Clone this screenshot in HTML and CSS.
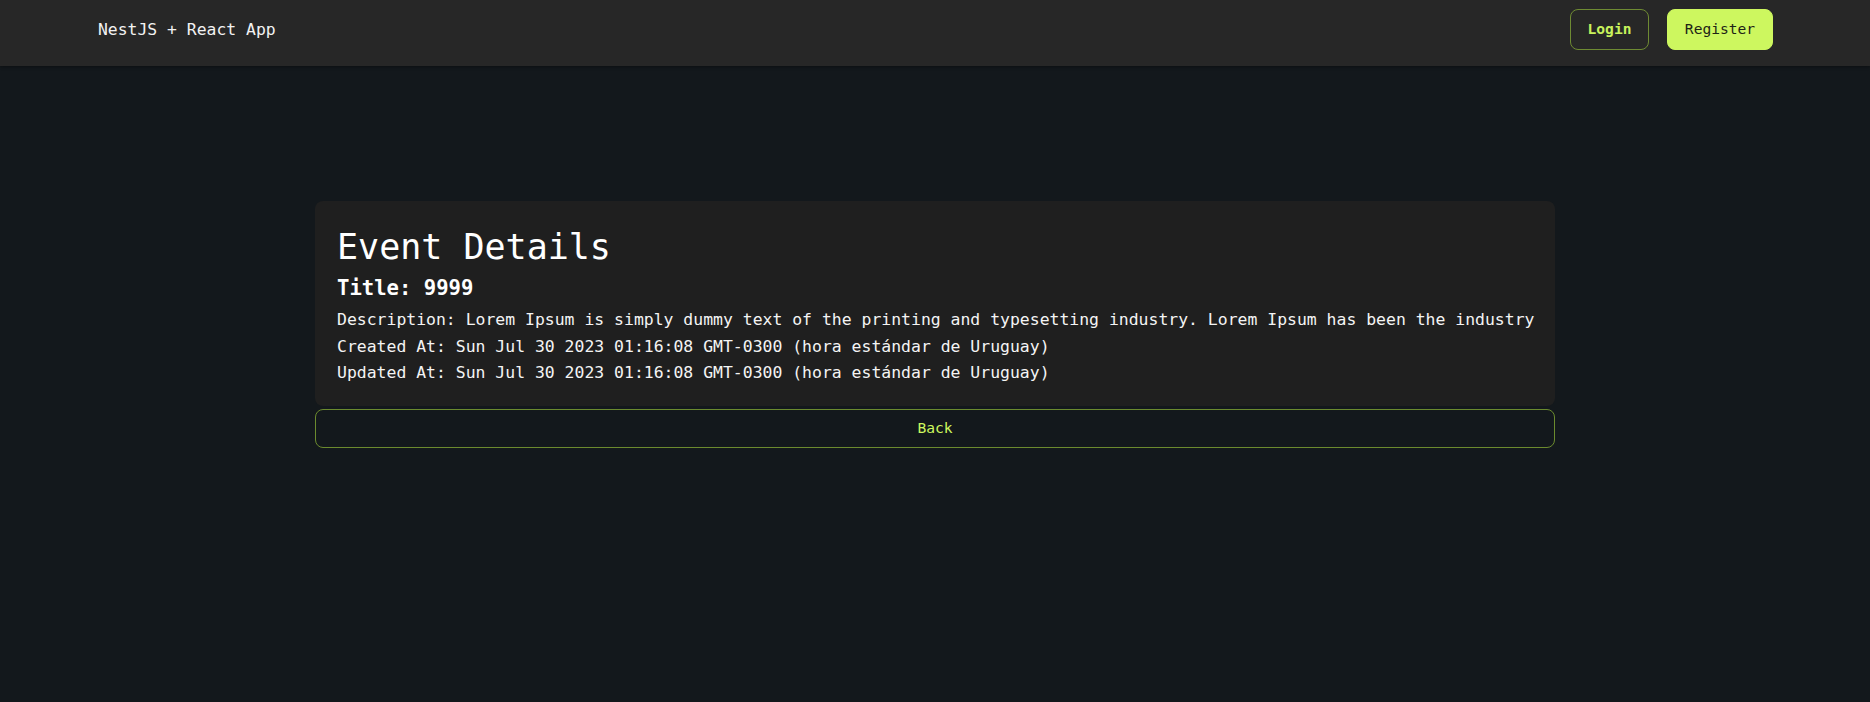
FILE: index.html
```html
<!DOCTYPE html>
<html lang="en">
<head>
<meta charset="utf-8">
<title>NestJS + React App</title>
<link rel="stylesheet" href="styles.css">
</head>
<body>
<header class="topbar">
  <div class="brand">NestJS + React App</div>
  <nav class="actions">
    <button class="btn btn-outline">Login</button>
    <button class="btn btn-solid">Register</button>
  </nav>
</header>
<main class="main">
  <section class="card">
    <h1 class="card-title">Event Details</h1>
    <h2 class="card-sub">Title: 9999</h2>
    <p class="line">Description: Lorem Ipsum is simply dummy text of the printing and typesetting industry. Lorem Ipsum has been the industry</p>
    <p class="line">Created At: Sun Jul 30 2023 01:16:08 GMT-0300 (hora estándar de Uruguay)</p>
    <p class="line">Updated At: Sun Jul 30 2023 01:16:08 GMT-0300 (hora estándar de Uruguay)</p>
  </section>
  <button class="back">Back</button>
</main>
</body>
</html>
```
FILE: styles.css
```css
html, body {
  margin: 0;
  padding: 0;
}
body {
  background: #13181c;
  color: #f4f4f4;
  font-family: "DejaVu Sans Mono", "Liberation Mono", monospace;
  min-height: 702px;
}
.topbar {
  display: flex;
  align-items: center;
  justify-content: space-between;
  background: #272727;
  padding: 9px 97px 16px 98px;
  box-shadow: 0 1px 3px rgba(0, 0, 0, 0.35);
}
.brand {
  font-size: 16.4px;
  color: #f2f2f2;
  line-height: 41px;
}
.actions {
  display: flex;
  gap: 18px;
}
.btn {
  font-family: inherit;
  font-size: 14.6px;
  height: 41px;
  border-radius: 8px;
  cursor: pointer;
  line-height: 1;
}
.btn-outline {
  background: transparent;
  border: 1px solid #6e8a33;
  color: #c8f25c;
  font-weight: bold;
  padding: 0;
  width: 79px;
}
.btn-solid {
  background: #cdf75f;
  border: 1px solid #cdf75f;
  color: #1e2416;
  width: 106px;
  padding: 0;
}
.main {
  width: 1240px;
  margin: 135px auto 0;
  display: flex;
  flex-direction: column;
}
.card {
  background: #1f1f1f;
  border-radius: 8px;
  padding: 24px 22px 19px;
}
.card-title {
  margin: 0 0 5px;
  font-size: 35px;
  font-weight: normal;
  line-height: 44px;
  color: #ffffff;
}
.card-sub {
  margin: 0 0 5px;
  font-size: 20.6px;
  font-weight: bold;
  line-height: 28px;
  color: #ffffff;
}
.line {
  margin: 0;
  font-size: 16.45px;
  line-height: 26.7px;
  white-space: nowrap;
  color: #f4f4f4;
}
.back {
  margin-top: 3px;
  height: 39px;
  padding: 0 0 2px;
  background: transparent;
  border: 1px solid #6b8a2e;
  border-radius: 8px;
  color: #cdf75f;
  font-family: inherit;
  font-size: 14.6px;
  cursor: pointer;
}
```
